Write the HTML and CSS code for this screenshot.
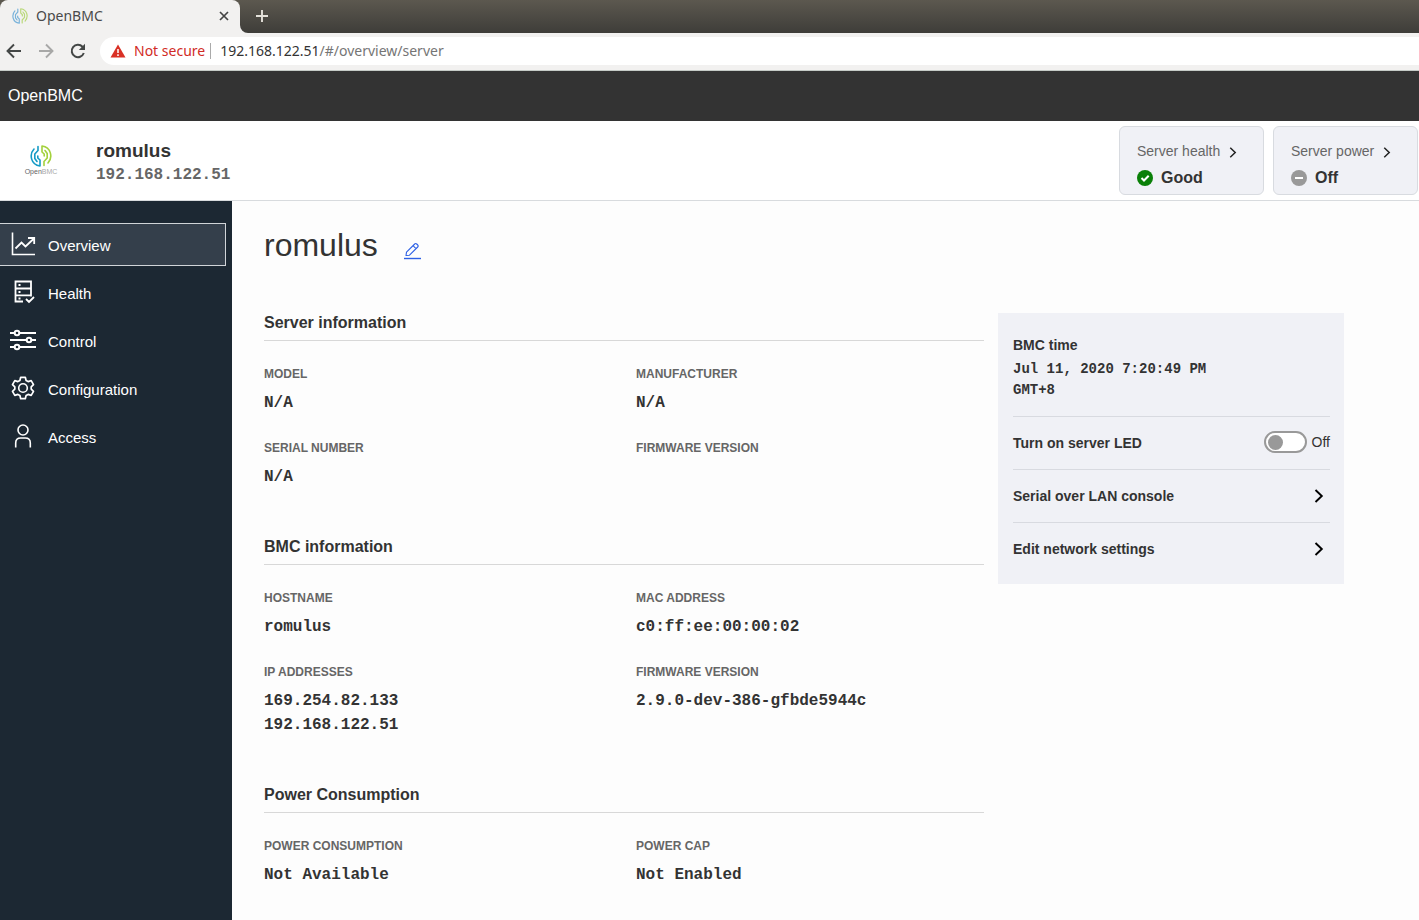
FILE: index.html
```html
<!DOCTYPE html>
<html lang="en">
<head>
<meta charset="utf-8">
<title>OpenBMC</title>
<link rel="stylesheet" href="styles.css">
</head>
<body>
<svg class="defs" aria-hidden="true">
  <symbol id="mark" viewBox="0 0 22 22">
    <g fill="none" stroke-width="1.6" stroke-linecap="round" stroke-linejoin="round">
      <g stroke="var(--mark-a)">
        <path d="M4 4C-1 9.500 .8 19.800 10 21V15L7.800 13V11"/>
        <path d="M8 1.500V5.500L4.800 9v4.500L7 16.500"/>
      </g>
      <g stroke="var(--mark-b)" transform="rotate(180 11 11)">
        <path d="M4 4C-1 9.500 .8 19.800 10 21V15L7.800 13V11"/>
        <path d="M8 1.500V5.500L4.800 9v4.500L7 16.500"/>
      </g>
    </g>
  </symbol>
  <symbol id="chevron" viewBox="0 0 10 14">
    <path d="M1.500 1 7.800 7 1.500 13" fill="none" stroke="currentColor" stroke-width="1.900"/>
  </symbol>
</svg>

<div class="browser">
  <div class="tabs">
    <div class="tab">
      <svg class="favicon"><use href="#mark"/></svg>
      <span class="tab-title">OpenBMC</span>
      <button class="icon-button" aria-label="Close tab">
        <svg width="10" height="10" viewBox="0 0 10 10"><path d="M1 1l8 8M9 1 1 9" stroke="#444" stroke-width="1.700"/></svg>
      </button>
    </div>
    <div class="tab-strip">
      <button class="icon-button" aria-label="New tab">
        <svg width="12" height="12" viewBox="0 0 12 12"><path d="M6 0v12M0 6h12" stroke="#e4e1da" stroke-width="1.900"/></svg>
      </button>
    </div>
  </div>
  <div class="toolbar">
    <button class="icon-button" aria-label="Back">
      <svg width="16" height="16" viewBox="0 0 16 16"><path d="M15 8H2M8 1.500 1.500 8 8 14.500" fill="none" stroke="#444746" stroke-width="1.900"/></svg>
    </button>
    <button class="icon-button" aria-label="Forward">
      <svg width="16" height="16" viewBox="0 0 16 16"><path d="M1 8h13M8 1.500 14.500 8 8 14.500" fill="none" stroke="#a8a8a7" stroke-width="1.900"/></svg>
    </button>
    <button class="icon-button" aria-label="Reload">
      <svg width="16" height="16" viewBox="0 0 16 16"><path d="M13.800 10A6.200 6.200 0 1 1 12.500 3.700L14 5.200" fill="none" stroke="#444746" stroke-width="2"/><path d="M15 .8V7H8.800z" fill="#444746"/></svg>
    </button>
    <div class="address">
      <svg width="16" height="14" viewBox="0 0 16 14"><path d="M8 .5 15.500 13.500H.5z" fill="#d93025"/><path d="M8 5v4M8 10.300v1.700" stroke="#fff" stroke-width="1.500"/></svg>
      <span class="insecure">Not secure</span>
      <span class="address-rule"></span>
      <span class="url">192.168.122.51<span class="url-path">/#/overview/server</span></span>
    </div>
  </div>
</div>

<div class="app-bar">OpenBMC</div>

<header class="info">
  <div class="logo">
    <svg width="22" height="22"><use href="#mark"/></svg>
    <span class="logo-text">Open<span class="logo-light">BMC</span></span>
  </div>
  <div class="identity">
    <div class="identity-name">romulus</div>
    <div class="identity-ip">192.168.122.51</div>
  </div>
  <a class="card" href="#health">
    <span class="card-label">Server health <svg class="card-chevron"><use href="#chevron"/></svg></span>
    <span class="card-value">
      <svg width="16" height="16" viewBox="0 0 16 16"><circle cx="8" cy="8" r="8" fill="#0a8008"/><path d="M4.500 8 7 10.500 11.700 5.700" fill="none" stroke="#fff" stroke-width="2"/></svg>
      Good
    </span>
  </a>
  <a class="card" href="#power">
    <span class="card-label">Server power <svg class="card-chevron"><use href="#chevron"/></svg></span>
    <span class="card-value">
      <svg width="16" height="16" viewBox="0 0 16 16"><circle cx="8" cy="8" r="8" fill="#999"/><path d="M4 8h8" stroke="#fff" stroke-width="2"/></svg>
      Off
    </span>
  </a>
</header>

<div class="shell">
  <nav class="sidebar">
    <a class="nav-item active" href="#overview">
      <svg class="nav-icon" viewBox="0 0 26 26"><path d="M2.500 1.500v22H25" stroke-width="1.600"/><path d="M5.500 17.500 11.500 11.500 15.500 15.500 24 7.500M18 7h6.200v6" stroke-width="1.800"/></svg>
      <span>Overview</span>
    </a>
    <a class="nav-item" href="#health">
      <svg class="nav-icon" viewBox="0 0 26 26"><path d="M13 22.500H5.500V2.500h15.500v15M5.500 9.500H21M5.500 16.300H21M8.500 6h2M8.500 13h2M8.500 19.500h2M16 20l3 3 5-5" stroke-width="1.800"/></svg>
      <span>Health</span>
    </a>
    <a class="nav-item" href="#control">
      <svg class="nav-icon" viewBox="0 0 26 26"><path d="M0 6h4M10 6h16M0 13h16M22 13h4M0 20h4M10 20h16" stroke-width="1.900"/><g stroke-width="2"><circle cx="7" cy="6" r="2.300"/><circle cx="19" cy="13" r="2.300"/><circle cx="7" cy="20" r="2.300"/></g></svg>
      <span>Control</span>
    </a>
    <a class="nav-item" href="#configuration">
      <svg class="nav-icon" viewBox="0 0 26 26"><circle cx="13" cy="13" r="4.300" stroke-width="1.600"/><path d="M10.700 2.300h4.600l.8 3.200 2 1.100 3.100-1 2.300 4-2.300 2.300v2.200l2.300 2.300-2.300 4-3.100-1-2 1.100-.8 3.200h-4.600l-.8-3.200-2-1.100-3.100 1-2.300-4 2.300-2.300v-2.200L2.500 9.600l2.300-4 3.100 1 2-1.100z" stroke-width="1.700" stroke-linejoin="round"/></svg>
      <span>Configuration</span>
    </a>
    <a class="nav-item" href="#access">
      <svg class="nav-icon" viewBox="0 0 26 26"><circle cx="13" cy="7" r="5" stroke-width="1.600"/><path d="M5.700 24.500v-4.500q0-5 5-5h4.600q5 0 5 5v4.500" stroke-width="1.600"/></svg>
      <span>Access</span>
    </a>
  </nav>

  <main class="main">
    <div class="title">
      <h1>romulus</h1>
      <button class="icon-button edit" aria-label="Edit hostname">
        <svg width="18" height="18" viewBox="0 0 18 18"><path d="M0 16.500h17" stroke="#2d60e5" stroke-width="1.400"/><path d="M2 13.500 2.500 10.200 10.700 2q1-1 2 0l1 1q1 1 0 2L5.500 13.200zM9 3.700l3 3" fill="none" stroke="#2d60e5" stroke-width="1.100" stroke-linejoin="round"/></svg>
      </button>
    </div>
    <div class="columns">
      <div class="details">
        <section>
          <h2>Server information</h2>
          <dl>
            <div><dt>Model</dt><dd>N/A</dd></div>
            <div><dt>Manufacturer</dt><dd>N/A</dd></div>
            <div><dt>Serial number</dt><dd>N/A</dd></div>
            <div><dt>Firmware version</dt><dd></dd></div>
          </dl>
        </section>
        <section>
          <h2>BMC information</h2>
          <dl>
            <div><dt>Hostname</dt><dd>romulus</dd></div>
            <div><dt>MAC address</dt><dd>c0:ff:ee:00:00:02</dd></div>
            <div><dt>IP addresses</dt><dd>169.254.82.133<br>192.168.122.51</dd></div>
            <div><dt>Firmware version</dt><dd>2.9.0-dev-386-gfbde5944c</dd></div>
          </dl>
        </section>
        <section>
          <h2>Power Consumption</h2>
          <dl>
            <div><dt>Power consumption</dt><dd>Not Available</dd></div>
            <div><dt>Power cap</dt><dd>Not Enabled</dd></div>
          </dl>
        </section>
      </div>

      <aside class="panel">
        <div class="time">
          <div class="time-label">BMC time</div>
          <div class="time-value">Jul 11, 2020 7:20:49 PM<br>GMT+8</div>
        </div>
        <div class="panel-row">
          <label for="led">Turn on server LED</label>
          <span class="switch-group">
            <input class="switch" type="checkbox" id="led">
            <span class="switch-state">Off</span>
          </span>
        </div>
        <a class="panel-row" href="#console">Serial over LAN console <svg class="row-chevron"><use href="#chevron"/></svg></a>
        <a class="panel-row" href="#network">Edit network settings <svg class="row-chevron"><use href="#chevron"/></svg></a>
      </aside>
    </div>
  </main>
</div>
</body>
</html>
```
FILE: styles.css
```css
* {
  box-sizing: border-box;
}

body {
  margin: 0;
  min-height: 100vh;
  display: flex;
  flex-direction: column;
  background: #fdfdfd;
  color: #333;
  font-family: "Liberation Sans", Arial, sans-serif;
  font-size: 14px;
}

a {
  color: inherit;
  text-decoration: none;
}

svg {
  display: block;
  flex: none;
}

h1, h2, dl, dd {
  margin: 0;
}

.defs {
  position: absolute;
  width: 0;
  height: 0;
}

.icon-button {
  display: flex;
  padding: 0;
  border: 0;
  background: none;
}

/* Browser window */
.browser {
  background: #f2f1f0;
  border-bottom: 1px solid #c5cbc7;
  font-family: "Noto Sans", sans-serif;
  font-size: 14px;
}

.tabs {
  display: flex;
  height: 33px;
  background: linear-gradient(#5c584f 16px, #f2f1f0 16px);
}

.tab {
  display: flex;
  align-items: center;
  width: 240px;
  padding: 0 11px 2px 12px;
  border-radius: 8px 8px 0 0;
  background: #f2f1f0;
}

.tab-strip {
  display: flex;
  flex: 1;
  align-items: center;
  padding: 0 0 1px 16px;
  border-bottom-left-radius: 8px;
  background: linear-gradient(#5c584f, #3e3d39);
}

.favicon {
  width: 16px;
  height: 16px;
  margin-right: 8px;
  --mark-a: #78b2da;
  --mark-b: #b9d878;
}

.tab-title {
  flex: 1;
  color: #4a4a4a;
}

.toolbar {
  display: flex;
  align-items: center;
  gap: 16px;
  height: 37px;
  padding: 0 0 2px 6px;
}

.address {
  display: flex;
  flex: 1;
  align-items: center;
  height: 28px;
  margin-left: -2px;
  padding-left: 10px;
  border-radius: 14px 0 0 14px;
  background: #fff;
}

.insecure {
  margin-left: 8px;
  color: #d12b26;
}

.address-rule {
  width: 1px;
  height: 16px;
  margin: 0 9px 0 5px;
  background: #aaa;
}

.url {
  color: #333;
}

.url-path {
  color: #757575;
}

/* Application header */
.app-bar {
  padding: 13px 8px;
  background: #333;
  color: #fff;
  font-size: 16px;
  line-height: 24px;
}

.info {
  display: flex;
  align-items: center;
  padding: 5px 1px 5px 0;
  border-bottom: 1px solid #d8dbde;
  background: #fff;
}

.logo {
  display: flex;
  flex-direction: column;
  align-items: center;
  width: 82px;
  --mark-a: #169bc6;
  --mark-b: #a3d13c;
}

.logo-text {
  margin-top: 1px;
  font-size: 7px;
  line-height: 8px;
  color: #666;
}

.logo-light {
  color: #aaa;
}

.identity {
  flex: 1;
  margin-left: 14px;
  padding-top: 5px;
  font-weight: 700;
  line-height: 24px;
}

.identity-name {
  font-size: 19px;
}

.identity-ip {
  color: #666;
  font-family: "Liberation Mono", monospace;
  font-size: 16px;
}

.card {
  width: 145px;
  margin-left: 9px;
  padding: 13px 0 4px 17px;
  border: 1px solid #d8dbe0;
  border-radius: 6px;
  background: #f0f1f6;
}

.card-label,
.card-value {
  display: flex;
  align-items: center;
}

.card-label {
  gap: 9px;
  line-height: 22px;
  color: #666;
}

.card-chevron {
  width: 8px;
  height: 11px;
  margin-top: 3px;
  color: #222;
}

.card-value {
  gap: 8px;
  padding-top: 4px;
  font-size: 16px;
  font-weight: 700;
  line-height: 24px;
}

/* Page body */
.shell {
  display: flex;
  flex: 1;
}

.sidebar {
  flex: none;
  width: 232px;
  padding: 22px 6px 0 0;
  background: #1c2833;
}

.nav-item {
  display: flex;
  align-items: center;
  gap: 12px;
  height: 43px;
  margin-bottom: 5px;
  padding-left: 10px;
  border: 1px solid transparent;
  border-left: 0;
  color: #fff;
  font-size: 15px;
}

.nav-item span {
  padding-top: 2px;
}

.nav-item.active {
  border-color: #d0d4d8;
  background: #343f4b;
}

.nav-icon {
  width: 26px;
  height: 26px;
  margin-bottom: 2px;
  fill: none;
  stroke: #fff;
}

.main {
  flex: 1;
  padding: 24px 75px 32px 32px;
}

.title {
  display: flex;
  align-items: center;
  gap: 26px;
  margin-bottom: 45px;
}

h1 {
  font-size: 32px;
  font-weight: 400;
  line-height: 40px;
}

.edit {
  margin-top: 12px;
}

.columns {
  display: grid;
  grid-template-columns: 720fr 346fr;
  gap: 14px;
  align-items: start;
  max-width: 1080px;
}

.details {
  display: grid;
  gap: 45px;
}

h2 {
  padding: 1px 0 5px;
  border-bottom: 1px solid #d8d8d8;
  font-size: 16px;
  line-height: 24px;
}

dl {
  display: grid;
  grid-template-columns: 372fr 348fr;
  row-gap: 25px;
  padding-top: 25px;
}

dt {
  margin-bottom: 9px;
  color: #666;
  font-size: 12px;
  font-weight: 700;
  line-height: 16px;
  text-transform: uppercase;
}

dd {
  font-family: "Liberation Mono", monospace;
  font-size: 16px;
  font-weight: 700;
  line-height: 24px;
}

.panel {
  margin-top: 3px;
  padding: 21px 14px 9px 15px;
  background: #f0f1f6;
  font-weight: 700;
}

.time {
  padding-bottom: 15px;
}

.time-label {
  line-height: 22px;
}

.time-value {
  padding-top: 3px;
  font-family: "Liberation Mono", monospace;
  line-height: 21px;
}

.panel-row {
  display: flex;
  align-items: center;
  justify-content: space-between;
  height: 53px;
  border-top: 1px solid #d8dae0;
}

.switch-group {
  display: flex;
  align-items: center;
  gap: 5px;
  padding-bottom: 2px;
  font-weight: 400;
}

.switch {
  appearance: none;
  display: flex;
  align-items: center;
  width: 43px;
  height: 22px;
  margin: 0;
  padding: 0 2px;
  border: 2px solid #999;
  border-radius: 11px;
  background: #fff;
}

.switch::before {
  content: "";
  width: 15px;
  height: 15px;
  border-radius: 50%;
  background: #999;
}

.switch:checked {
  justify-content: flex-end;
}

.row-chevron {
  width: 10px;
  height: 14px;
  margin-right: 6px;
  color: #000;
}
```
